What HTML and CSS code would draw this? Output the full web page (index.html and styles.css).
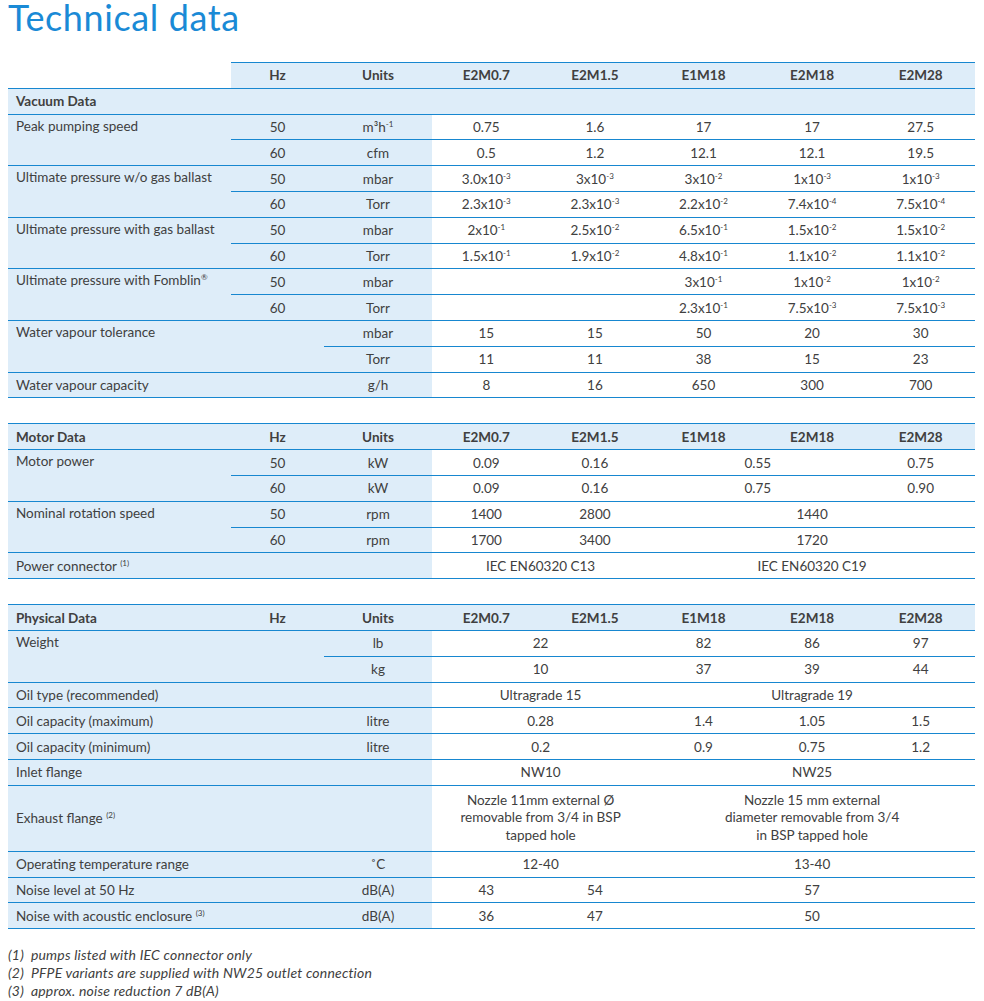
FILE: index.html
```html
<!DOCTYPE html>
<html>
<head>
<meta charset="utf-8">
<link rel="stylesheet" href="styles.css">
</head>
<body>
<h1 class="title">Technical data</h1>

<table class="spec">
  <colgroup><col class="c-lbl"><col class="c-hz"><col class="c-un"><col class="c-d"><col class="c-d"><col class="c-d"><col class="c-d"><col class="c-d"></colgroup>
  <tr class="hd">
    <td class="blank"></td><td>Hz</td><td>Units</td><td>E2M0.7</td><td>E2M1.5</td><td>E1M18</td><td>E2M18</td><td>E2M28</td>
  </tr>
  <tr class="hd"><td class="lbl" colspan="8">Vacuum Data</td></tr>
  <tr><td class="lbl top" rowspan="2">Peak pumping speed</td><td class="s">50</td><td class="s">m³h<sup>-1</sup></td><td>0.75</td><td>1.6</td><td>17</td><td>17</td><td>27.5</td></tr>
  <tr><td class="s">60</td><td class="s">cfm</td><td>0.5</td><td>1.2</td><td>12.1</td><td>12.1</td><td>19.5</td></tr>
  <tr><td class="lbl top" rowspan="2">Ultimate pressure w/o gas ballast</td><td class="s">50</td><td class="s">mbar</td><td>3.0x10<sup>-3</sup></td><td>3x10<sup>-3</sup></td><td>3x10<sup>-2</sup></td><td>1x10<sup>-3</sup></td><td>1x10<sup>-3</sup></td></tr>
  <tr><td class="s">60</td><td class="s">Torr</td><td>2.3x10<sup>-3</sup></td><td>2.3x10<sup>-3</sup></td><td>2.2x10<sup>-2</sup></td><td>7.4x10<sup>-4</sup></td><td>7.5x10<sup>-4</sup></td></tr>
  <tr><td class="lbl top" rowspan="2">Ultimate pressure with gas ballast</td><td class="s">50</td><td class="s">mbar</td><td>2x10<sup>-1</sup></td><td>2.5x10<sup>-2</sup></td><td>6.5x10<sup>-1</sup></td><td>1.5x10<sup>-2</sup></td><td>1.5x10<sup>-2</sup></td></tr>
  <tr><td class="s">60</td><td class="s">Torr</td><td>1.5x10<sup>-1</sup></td><td>1.9x10<sup>-2</sup></td><td>4.8x10<sup>-1</sup></td><td>1.1x10<sup>-2</sup></td><td>1.1x10<sup>-2</sup></td></tr>
  <tr><td class="lbl top" rowspan="2">Ultimate pressure with Fomblin<sup>®</sup></td><td class="s">50</td><td class="s">mbar</td><td></td><td></td><td>3x10<sup>-1</sup></td><td>1x10<sup>-2</sup></td><td>1x10<sup>-2</sup></td></tr>
  <tr><td class="s">60</td><td class="s">Torr</td><td></td><td></td><td>2.3x10<sup>-1</sup></td><td>7.5x10<sup>-3</sup></td><td>7.5x10<sup>-3</sup></td></tr>
  <tr><td class="lbl top" rowspan="2" colspan="2">Water vapour tolerance</td><td class="s">mbar</td><td>15</td><td>15</td><td>50</td><td>20</td><td>30</td></tr>
  <tr><td class="s">Torr</td><td>11</td><td>11</td><td>38</td><td>15</td><td>23</td></tr>
  <tr><td class="lbl" colspan="2">Water vapour capacity</td><td class="s">g/h</td><td>8</td><td>16</td><td>650</td><td>300</td><td>700</td></tr>
</table>

<table class="spec">
  <colgroup><col class="c-lbl"><col class="c-hz"><col class="c-un"><col class="c-d"><col class="c-d"><col class="c-d"><col class="c-d"><col class="c-d"></colgroup>
  <tr class="hd">
    <td class="lbl">Motor Data</td><td>Hz</td><td>Units</td><td>E2M0.7</td><td>E2M1.5</td><td>E1M18</td><td>E2M18</td><td>E2M28</td>
  </tr>
  <tr><td class="lbl top" rowspan="2">Motor power</td><td class="s">50</td><td class="s">kW</td><td>0.09</td><td>0.16</td><td colspan="2">0.55</td><td>0.75</td></tr>
  <tr><td class="s">60</td><td class="s">kW</td><td>0.09</td><td>0.16</td><td colspan="2">0.75</td><td>0.90</td></tr>
  <tr><td class="lbl top" rowspan="2">Nominal rotation speed</td><td class="s">50</td><td class="s">rpm</td><td>1400</td><td>2800</td><td colspan="3">1440</td></tr>
  <tr><td class="s">60</td><td class="s">rpm</td><td>1700</td><td>3400</td><td colspan="3">1720</td></tr>
  <tr><td class="lbl" colspan="2">Power connector <sup class="fn">(1)</sup></td><td class="s"></td><td colspan="2">IEC EN60320 C13</td><td colspan="3">IEC EN60320 C19</td></tr>
</table>

<table class="spec">
  <colgroup><col class="c-lbl"><col class="c-hz"><col class="c-un"><col class="c-d"><col class="c-d"><col class="c-d"><col class="c-d"><col class="c-d"></colgroup>
  <tr class="hd">
    <td class="lbl">Physical Data</td><td>Hz</td><td>Units</td><td>E2M0.7</td><td>E2M1.5</td><td>E1M18</td><td>E2M18</td><td>E2M28</td>
  </tr>
  <tr><td class="lbl top" rowspan="2" colspan="2">Weight</td><td class="s">lb</td><td colspan="2">22</td><td>82</td><td>86</td><td>97</td></tr>
  <tr><td class="s">kg</td><td colspan="2">10</td><td>37</td><td>39</td><td>44</td></tr>
  <tr><td class="lbl" colspan="2">Oil type (recommended)</td><td class="s"></td><td colspan="2">Ultragrade 15</td><td colspan="3">Ultragrade 19</td></tr>
  <tr><td class="lbl" colspan="2">Oil capacity (maximum)</td><td class="s">litre</td><td colspan="2">0.28</td><td>1.4</td><td>1.05</td><td>1.5</td></tr>
  <tr><td class="lbl" colspan="2">Oil capacity (minimum)</td><td class="s">litre</td><td colspan="2">0.2</td><td>0.9</td><td>0.75</td><td>1.2</td></tr>
  <tr><td class="lbl" colspan="2">Inlet flange</td><td class="s"></td><td colspan="2">NW10</td><td colspan="3">NW25</td></tr>
  <tr class="tall"><td class="lbl" colspan="2">Exhaust flange <sup class="fn">(2)</sup></td><td class="s"></td><td colspan="2" class="multi">Nozzle 11mm external Ø<br>removable from 3/4 in BSP<br>tapped hole</td><td colspan="3" class="multi">Nozzle 15 mm external<br>diameter removable from 3/4<br>in BSP tapped hole</td></tr>
  <tr><td class="lbl" colspan="2">Operating temperature range</td><td class="s">˚C</td><td colspan="2">12-40</td><td colspan="3">13-40</td></tr>
  <tr><td class="lbl" colspan="2">Noise level at 50 Hz</td><td class="s">dB(A)</td><td>43</td><td>54</td><td colspan="3">57</td></tr>
  <tr><td class="lbl" colspan="2">Noise with acoustic enclosure <sup class="fn">(3)</sup></td><td class="s">dB(A)</td><td>36</td><td>47</td><td colspan="3">50</td></tr>
</table>

<div class="notes">
  <p>(1)&nbsp; pumps listed with IEC connector only</p>
  <p>(2)&nbsp; PFPE variants are supplied with NW25 outlet connection</p>
  <p>(3)&nbsp; approx. noise reduction 7 dB(A)</p>
</div>
</body>
</html>
```

FILE: styles.css
```css
html, body {
  margin: 0;
  padding: 0;
  background: #ffffff;
}
body {
  padding: 0 8px;
  font-family: Lato, "Open Sans", "Liberation Sans", sans-serif;
  color: #404040;
}
.title {
  margin: 0;
  padding-top: 4px;
  font-weight: 400;
  font-size: 36px;
  line-height: 26px;
  height: 26px;
  color: #1a8ad6;
  letter-spacing: 0.6px;
}
.spec {
  border-collapse: collapse;
  table-layout: fixed;
  width: 967px;
  margin-top: 32px;
  font-size: 13.5px;
}
.spec + .spec {
  margin-top: 25px;
}
.c-lbl { width: 223px; }
.c-hz { width: 93px; }
.c-un { width: 108px; }
.c-d { width: 108.6px; }
.spec td {
  height: 25.8px;
  padding: 0;
  border-top: 1px solid #1787d0;
  border-bottom: 1px solid #1787d0;
  text-align: center;
  vertical-align: middle;
  white-space: nowrap;
  box-sizing: border-box;
}
.spec td.s,
.spec td.lbl {
  background: #deedf9;
}
.spec td.lbl {
  text-align: left;
  padding-left: 8px;
}
.spec td.top {
  vertical-align: top;
  padding-top: 3px;
}
.spec .hd td {
  background: #deedf9;
  font-weight: 700;
}
.spec .hd td.blank {
  background: #ffffff;
  border-top: none;
}
.spec .tall td {
  height: 66px;
}
.spec td.multi {
  line-height: 17.5px;
}
sup {
  font-size: 8px;
  line-height: 0;
  vertical-align: 5px;
}
sup.fn {
  font-size: 8px;
}
.notes {
  margin-top: 17px;
  font-style: italic;
  font-size: 14px;
  line-height: 17.7px;
  letter-spacing: 0.2px;
}
.notes p {
  margin: 0;
}
```
